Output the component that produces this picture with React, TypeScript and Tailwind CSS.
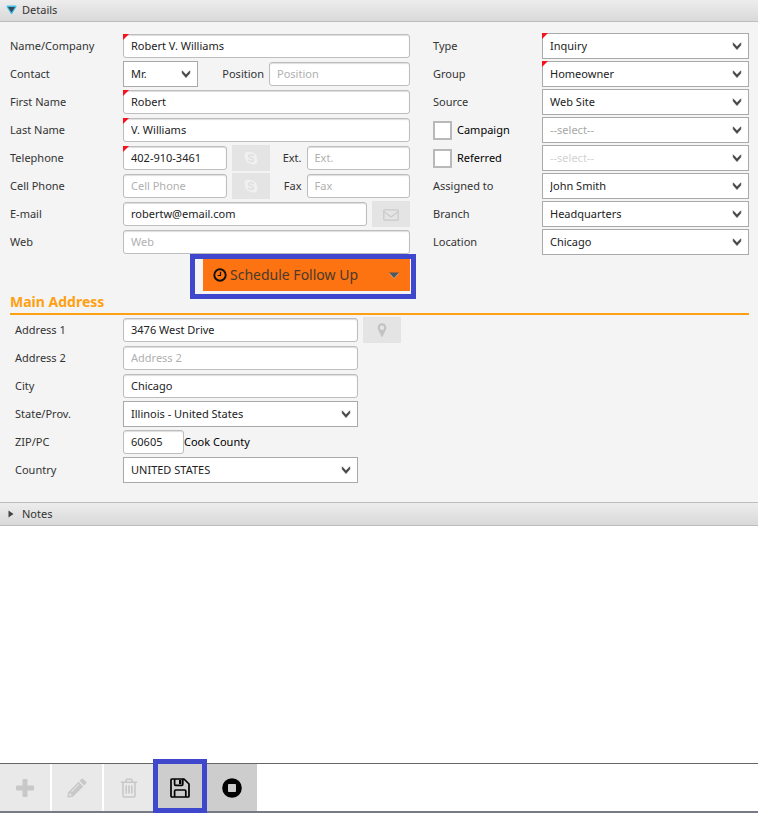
import React from 'react';
import clsx from 'clsx';

const ROW = 'flex items-center min-h-[26px]';
const INPUT =
    'block h-6 w-full min-w-0 rounded-[3px] border border-[#bdbdbd] bg-white px-[7px] pb-[2px] text-[#222] shadow-[inset_0_1px_1px_#ddd] outline-none placeholder:text-[#b0b0b0]';

const Chevron = () => (
    <svg className="pointer-events-none absolute right-[7px] top-[9px]" width="10" height="9" viewBox="0 0 10 9" fill="none" aria-hidden="true">
        <path d="M1.2 0.8 5 4.8 8.8 0.8V3.2L5 7.6 1.2 3.2Z" fill="#444" stroke="#444" strokeWidth="0.6" />
    </svg>
);

const Required = () => (
    <span className="pointer-events-none absolute left-0 top-0 border-r-[6px] border-t-[6px] border-r-transparent border-t-[#f5121d]" />
);

type FieldProps = {
    id: string;
    value?: string;
    placeholder?: string;
    required?: boolean;
    label?: string;
    className?: string;
};

const TextBox = ({ id, value = '', placeholder, required, label, className }: FieldProps) => (
    <div className={clsx('relative', className)}>
        <input id={id} type="text" defaultValue={value} placeholder={placeholder} aria-label={label} className={INPUT} />
        {required && <Required />}
    </div>
);

const SelectBox = ({ id, value, required, label, muted, className }: FieldProps & { muted?: string }) => (
    <div className={clsx('relative', className)}>
        <select
            id={id}
            aria-label={label}
            className={clsx('block h-[26px] w-full appearance-none border border-[#a9a9a9] bg-white pl-[7px] pr-6 outline-none', muted || 'text-[#222]')}
        >
            <option>{value}</option>
        </select>
        <Chevron />
        {required && <Required />}
    </div>
);

const Label = ({ id, children }: { id: string; children: React.ReactNode }) => (
    <label htmlFor={id} className="w-[113px] shrink-0">
        {children}
    </label>
);

const SideButton = ({ label, children }: { label: string; children: React.ReactNode }) => (
    <button type="button" aria-label={label} className="ml-[5px] flex h-[26px] w-[38px] shrink-0 items-center justify-center bg-[#e4e4e4] text-[#c9c9c9]">
        {children}
    </button>
);

const SkypeIcon = () => (
    <svg width="14" height="14" viewBox="0 0 14 14" fill="none" aria-hidden="true">
        <circle cx="4.2" cy="4.2" r="3.7" fill="#f0f0f0" />
        <circle cx="9.8" cy="9.8" r="3.7" fill="#f0f0f0" />
        <circle cx="7" cy="7" r="5.8" fill="#f0f0f0" />
        <path d="M9.6 4.8C9 3.9 8 3.6 7 3.6c-1.3 0-2.4.6-2.4 1.6C4.6 7.3 9.500 6.400 9.500 8.700c0 1-1.100 1.700-2.500 1.700-1.200 0-2.100-.5-2.600-1.400" stroke="#dcdcdc" strokeWidth="1.300" strokeLinecap="round" />
    </svg>
);

const EnvelopeIcon = () => (
    <svg className="mt-[2px]" width="16" height="12" viewBox="0 0 16 12" fill="none" stroke="currentColor" strokeWidth="1.2" aria-hidden="true">
        <rect x="0.8" y="0.8" width="14.4" height="10.4" rx="0.8" />
        <path d="M1 2.6 7 7.3q1 .8 2 0L15 2.6" />
    </svg>
);

const PinIcon = () => (
    <svg width="10" height="14" viewBox="0 0 10 14" fill="#c3c3c3" fillRule="evenodd" aria-hidden="true">
        <path d="M5 .3a4.400 4.400 0 0 1 4.400 4.400c0 .8-.2 1.400-.5 2L5.800 13.200q-.8 1-1.600 0L1.100 6.700c-.3-.6-.5-1.200-.5-2A4.400 4.400 0 0 1 5 .3ZM5 2.500a2.200 2.200 0 1 0 0 4.400 2.200 2.200 0 0 0 0-4.400Z" />
    </svg>
);

const ClockIcon = () => (
    <svg width="14" height="14" viewBox="0 0 14 14" fill="none" stroke="#111" aria-hidden="true">
        <circle cx="7" cy="7" r="5.7" strokeWidth="1.9" />
        <path d="M7.5 3.7V7.5H4.7" strokeWidth="1.2" />
    </svg>
);

const PlusIcon = () => (
    <svg width="18" height="18" viewBox="0 0 18 18" fill="currentColor" aria-hidden="true">
        <path d="M7.500 0h3q1 0 1 1V6.500H17q1 0 1 1v3q0 1-1 1H11.500V17q0 1-1 1h-3q-1 0-1-1V11.500H1q-1 0-1-1v-3q0-1 1-1H6.500V1q0-1 1-1Z" />
    </svg>
);

const PencilIcon = () => (
    <svg width="20" height="20" viewBox="0 0 20 20" fill="currentColor" fillRule="evenodd" aria-hidden="true">
        <path d="M14.400.9q.9-.9 1.800 0l2.900 2.900q.9.900 0 1.800L17.200 7.500 12.500 2.800ZM11.600 3.700l4.700 4.700L5.600 19.100.4 19.600l.5-5.200ZM11.600 6 4.300 13.300l.6.6L12.200 6.600ZM2.500 15.300l-.3 2.500 2.500-.3v-1.100H3.600v-1.100Z" />
    </svg>
);

const TrashIcon = () => (
    <svg width="18" height="20" viewBox="0 0 18 20" fill="none" stroke="currentColor" strokeWidth="1.6" aria-hidden="true">
        <path d="M.8 4.300h16.400M5.500 4 6.600 1.300h4.800L12.500 4M3 4.500V17.300q0 1.700 1.500 1.700h9q1.500 0 1.500-1.700V4.500M6.200 7.500v8M9 7.500v8M11.800 7.500v8" />
    </svg>
);

const SaveIcon = () => (
    <svg width="20" height="20" viewBox="0 0 20 20" fill="none" stroke="#000" strokeWidth="1.7" strokeLinejoin="round" aria-hidden="true">
        <path d="M1 2q0-1 1-1h12l5 5v12q0 1-1 1H2q-1 0-1-1ZM4.600 18.500V13q0-1 1-1h9.200q1 0 1 1v5.500M4.600 1.500V6.300q0 1 1 1h6.200q1 0 1-1V1.500" />
        <path d="M9 2h2.400v4H9Z" fill="#000" stroke="none" />
    </svg>
);

const StopIcon = () => (
    <svg width="20" height="20" viewBox="0 0 20 20" aria-hidden="true">
        <circle cx="10" cy="10" r="9.8" fill="#000" />
        <rect x="6" y="6" width="8" height="8" rx="0.8" fill="#ccc" />
    </svg>
);

const ContactForm = () => (
    <div className="flex flex-col gap-[2px]">
        <div className={ROW}>
            <Label id="name">Name/Company</Label>
            <TextBox id="name" value="Robert V. Williams" required className="flex-1" />
        </div>
        <div className={ROW}>
            <Label id="contact">Contact</Label>
            <SelectBox id="contact" value="Mr." className="w-[75px]" />
            <label htmlFor="position" className="ml-auto mr-[5px]">Position</label>
            <TextBox id="position" placeholder="Position" className="w-[141px]" />
        </div>
        <div className={ROW}>
            <Label id="first">First Name</Label>
            <TextBox id="first" value="Robert" required className="flex-1" />
        </div>
        <div className={ROW}>
            <Label id="last">Last Name</Label>
            <TextBox id="last" value="V. Williams" required className="flex-1" />
        </div>
        <div className={ROW}>
            <Label id="phone">Telephone</Label>
            <TextBox id="phone" value="402-910-3461" required className="flex-1" />
            <SideButton label="Call telephone"><SkypeIcon /></SideButton>
            <label htmlFor="ext" className="w-8 text-right mr-[5px]">Ext.</label>
            <TextBox id="ext" placeholder="Ext." className="flex-1" />
        </div>
        <div className={ROW}>
            <Label id="cell">Cell Phone</Label>
            <TextBox id="cell" placeholder="Cell Phone" className="flex-1" />
            <SideButton label="Call cell phone"><SkypeIcon /></SideButton>
            <label htmlFor="fax" className="w-8 text-right mr-[5px]">Fax</label>
            <TextBox id="fax" placeholder="Fax" className="flex-1" />
        </div>
        <div className={ROW}>
            <Label id="email">E-mail</Label>
            <TextBox id="email" value="robertw@email.com" className="flex-1" />
            <SideButton label="Send e-mail"><EnvelopeIcon /></SideButton>
        </div>
        <div className={ROW}>
            <Label id="web">Web</Label>
            <TextBox id="web" placeholder="Web" className="flex-1" />
        </div>
        <div className="relative ml-auto mt-[2px] w-[207px]">
            <button type="button" className="flex h-8 w-full items-center bg-[#fd7211] pl-[10px] pr-[11px] text-[14px] text-[#4a3a2c]">
                <ClockIcon />
                <span className="ml-[3px]">Schedule Follow Up</span>
                <svg className="ml-auto" width="10" height="7" viewBox="0 0 10 7" aria-hidden="true">
                    <path d="M0 0.5h10L5 6.5Z" fill="#4c5a62" />
                    <path d="M0.5 1.5 5 6.5 9.5 1.5" fill="none" stroke="#c9b39b" strokeWidth="0.8" />
                </svg>
            </button>
            <div className="pointer-events-none absolute -bottom-2 -left-[13px] -right-[6px] -top-[5px] border-[5px] border-[#3f48cc]" />
        </div>
    </div>
);

const OptionsForm = () => (
    <div className="flex flex-col gap-[2px]">
        {[
            { id: 'type', text: 'Type', value: 'Inquiry', required: true },
            { id: 'group', text: 'Group', value: 'Homeowner', required: true },
            { id: 'source', text: 'Source', value: 'Web Site' },
            { id: 'campaign', text: 'Campaign', value: '--select--', check: true, muted: 'text-[#a8a8a8]' },
            { id: 'referred', text: 'Referred', value: '--select--', check: true, muted: 'text-[#d2d2d2]' },
            { id: 'assigned', text: 'Assigned to', value: 'John Smith' },
            { id: 'branch', text: 'Branch', value: 'Headquarters' },
            { id: 'location', text: 'Location', value: 'Chicago' },
        ].map((f) => (
            <div key={f.id} className={ROW}>
                {f.check ? (
                    <label className="flex w-[109px] shrink-0 items-center gap-[5px] text-black">
                        <input type="checkbox" className="h-[19px] w-[19px] appearance-none border-2 border-[#b9b9b9] bg-white checked:bg-[#888]" />
                        {f.text}
                    </label>
                ) : (
                    <label htmlFor={f.id} className="w-[109px] shrink-0">{f.text}</label>
                )}
                <SelectBox
                    id={f.id}
                    label={f.check ? f.text : undefined}
                    value={f.value}
                    required={f.required}
                    muted={f.muted}
                    className="flex-1"
                />
            </div>
        ))}
    </div>
);

const AddressForm = () => (
    <div className="flex flex-col gap-[2px] pl-[5px] pt-[2px] [&_label]:w-[108px]">
        <div className={ROW}>
            <Label id="address1">Address 1</Label>
            <TextBox id="address1" value="3476 West Drive" className="w-[235px]" />
            <SideButton label="Show on map"><PinIcon /></SideButton>
        </div>
        <div className={ROW}>
            <Label id="address2">Address 2</Label>
            <TextBox id="address2" placeholder="Address 2" className="w-[235px]" />
        </div>
        <div className={ROW}>
            <Label id="city">City</Label>
            <TextBox id="city" value="Chicago" className="w-[235px]" />
        </div>
        <div className={ROW}>
            <Label id="state">State/Prov.</Label>
            <SelectBox id="state" value="Illinois - United States" className="w-[235px]" />
        </div>
        <div className={ROW}>
            <Label id="zip">ZIP/PC</Label>
            <TextBox id="zip" value="60605" className="w-[61px]" />
            <span className="text-black">Cook County</span>
        </div>
        <div className={ROW}>
            <Label id="country">Country</Label>
            <SelectBox id="country" value="UNITED STATES" className="w-[235px]" />
        </div>
    </div>
);

const TOOL = 'flex h-full w-[50px] items-center justify-center';

const Toolbar = () => (
    <footer className="flex h-[50px] shrink-0 gap-[2px] border-b-2 border-t border-t-[#666] border-b-[#777b88] bg-white">
        <button type="button" aria-label="Add" className={`${TOOL} bg-[#e9e9e9] text-[#c8c8c8]`}><PlusIcon /></button>
        <button type="button" aria-label="Edit" className={`${TOOL} bg-[#e9e9e9] text-[#c8c8c8]`}><PencilIcon /></button>
        <button type="button" aria-label="Delete" className={`${TOOL} bg-[#e9e9e9] text-[#c8c8c8]`}><TrashIcon /></button>
        <div className="relative -ml-px">
            <button type="button" aria-label="Save" className={`${TOOL} bg-[#cdcdcd]`}><SaveIcon /></button>
            <div className="pointer-events-none absolute -bottom-[2px] -left-[2px] -right-[2px] -top-[5px] border-[5px] border-[#3f48cc]" />
        </div>
        <button type="button" aria-label="Stop" className={`${TOOL} bg-[#cdcdcd]`}><StopIcon /></button>
    </footer>
);

const App = () => {
    return (
        <main className="flex min-h-screen flex-col bg-white font-['Noto_Sans',sans-serif] text-[11px] leading-4 text-[#333]">
            <section className="bg-[#f4f4f4]">
                <button type="button" aria-expanded="true" className="flex h-[22px] w-full items-center border-b border-[#bdbdbd] bg-linear-to-b from-[#ededed] to-[#d9d9d9] pb-[2px] pl-[6px]">
                    <svg className="mr-[5px]" width="11" height="10" viewBox="0 0 11 10" aria-hidden="true">
                        <path d="M1.5 1.5h8L5.5 8Z" fill="#34495a" stroke="#42bfe2" strokeWidth="2" strokeLinejoin="round" />
                        <path d="M2 2h7L5.5 7.5Z" fill="#34495a" />
                    </svg>
                    Details
                </button>
                <div className="pb-[19px] pl-[10px] pr-[9px] pt-[11px]">
                    <div className="grid grid-cols-[400fr_316fr] gap-[23px]">
                        <ContactForm />
                        <OptionsForm />
                    </div>
                    <h2 className="mt-px border-b-2 border-[#ffa012] pb-px text-[14px] font-bold leading-5 text-[#ffa012]">Main Address</h2>
                    <AddressForm />
                </div>
            </section>
            <section className="flex-1">
                <button type="button" aria-expanded="false" className="flex h-6 w-full items-center border-y border-[#bdbdbd] bg-linear-to-b from-[#ededed] to-[#d9d9d9] pl-[8px]">
                    <svg className="mr-[8px]" width="6" height="8" viewBox="0 0 6 8" aria-hidden="true">
                        <path d="M0.5 0.5v7L5.5 4Z" fill="#444" />
                    </svg>
                    Notes
                </button>
            </section>
            <Toolbar />
        </main>
    );
};

export default App;
